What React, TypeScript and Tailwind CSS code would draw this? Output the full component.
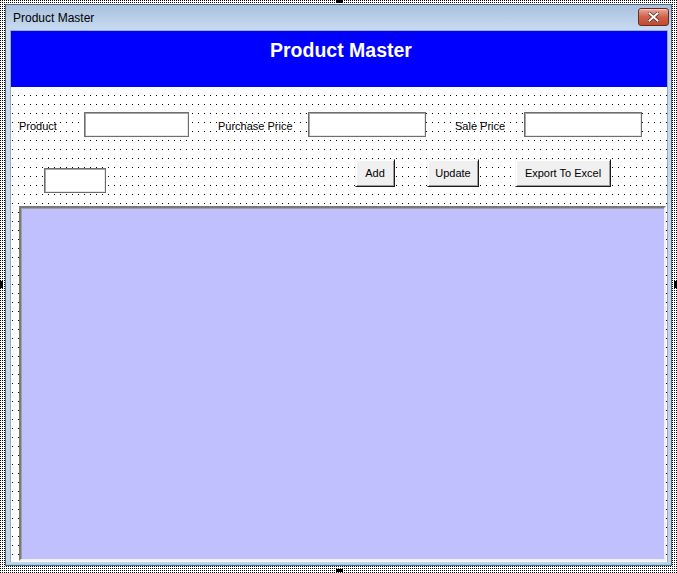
import React from "react";

const font = { fontFamily: '"Liberation Sans", Arial, sans-serif' };

function TextBox({ w }: { w: string }) {
  return (
    <div
      className={`${w} h-[25px] shrink-0 bg-white border border-[#6e6e6e] shadow-[inset_1px_1px_0_#a6a6a6,inset_-1px_-1px_0_#e6e6e6]`}
    />
  );
}

function Btn({ label, w, ml }: { label: string; w: string; ml: string }) {
  return (
    <div
      className={`${w} ${ml} h-[28px] shrink-0 flex items-center justify-center pt-[1px] bg-[#f0f0f0] border border-t-[#f4f4f4] border-l-[#f4f4f4] border-b-[#1a1a1a] border-r-[#1a1a1a] shadow-[inset_1px_1px_0_#ffffff,inset_-1px_-1px_0_#a0a0a0] text-[11px] text-black`}
    >
      {label}
    </div>
  );
}

export default function App() {
  return (
    <div
      className="relative w-[677px] h-[573px] overflow-hidden pt-[4px] pl-[5px] bg-white bg-[conic-gradient(at_1px_1px,#ffffff_0_75%,#000000_0)] bg-[length:2px_2px]"
      style={font}
    >
      {/* window */}
      <div className="w-[667px] h-[562px] flex flex-col border border-[#52677f] bg-[#c4d7ec]">
        {/* title bar */}
        <div className="h-[25px] shrink-0 flex items-center justify-between bg-gradient-to-b from-[#a9c1de] to-[#c8dbf0] pl-[7px] pr-[2px]">
          <span className="text-[12px] text-black leading-none">Product Master</span>
          <div className="w-[31px] h-[18px] mt-[-1px] rounded-[3px] border border-[#6b2a20] bg-gradient-to-b from-[#e6a898] via-[#d0604a] to-[#c24a32] flex items-center justify-center shadow-[inset_0_1px_0_#f4c8bc]">
            <svg width="11" height="10" viewBox="0 0 11 10">
              <path d="M1.5 1.5 L9.5 8.5 M9.5 1.5 L1.5 8.5" stroke="#4a1a14" strokeWidth="3.2" strokeLinecap="square" />
              <path d="M1.5 1.5 L9.5 8.5 M9.5 1.5 L1.5 8.5" stroke="#ffffff" strokeWidth="2" strokeLinecap="square" />
            </svg>
          </div>
        </div>
        {/* frame body */}
        <div className="flex-1 flex pl-[4px] pr-[3px] pb-[3px] bg-gradient-to-b from-[#c8dbf0] to-[#c0d4ea] shadow-[inset_0_-1px_0_#8fd3e6]">
          {/* client */}
          <div className="w-[658px] h-[532px] flex flex-col border-t border-l border-r border-[#9aa9bb] bg-white bg-[conic-gradient(at_1px_1px,transparent_0_75%,#000000_0)] bg-[length:6px_9px] bg-[position:1px_1px]">
            {/* header */}
            <div className="h-[56px] shrink-0 bg-[#0000ff] flex items-center justify-center">
              <span className="text-white font-bold text-[19.5px] mt-[-16px] ml-[4px]">
                Product Master
              </span>
            </div>
            {/* row 1 */}
            <div className="mt-[25px] h-[25px] flex items-center pl-[8px] text-[11px] text-black">
              <span className="w-[65px] shrink-0 pt-[4px]">Product</span>
              <TextBox w="w-[105px]" />
              <span className="w-[90px] ml-[29px] shrink-0 pt-[4px]">Purchase Price</span>
              <TextBox w="w-[118px]" />
              <span className="w-[69px] ml-[29px] shrink-0 pt-[4px]">Sale Price</span>
              <TextBox w="w-[118px]" />
            </div>
            {/* row 2 */}
            <div className="mt-[22px] flex items-start">
              <div className="ml-[33px] mt-[9px]">
                <TextBox w="w-[62px]" />
              </div>
              <Btn label="Add" w="w-[40px]" ml="ml-[249px]" />
              <Btn label="Update" w="w-[52px]" ml="ml-[32px]" />
              <Btn label="Export To Excel" w="w-[96px]" ml="ml-[36px]" />
            </div>
            {/* list box */}
            <div className="mt-[13px] ml-[8px] w-[647px] h-[355px] bg-[#c0c0ff] border-2 border-t-[#7a7a7a] border-l-[#7a7a7a] border-b-[#f0f0f0] border-r-[#f0f0f0] shadow-[inset_1px_1px_0_#a0a0a0]" />
          </div>
        </div>
      </div>
      {/* selection handles */}
      <div className="absolute left-[336px] top-0 w-[7px] h-[3px] bg-black" />
      <div className="absolute left-[336px] bottom-[1px] w-[7px] h-[3px] bg-black" />
      <div className="absolute left-0 top-[281px] w-[3px] h-[7px] bg-black" />
      <div className="absolute right-0 top-[281px] w-[3px] h-[7px] bg-black" />
    </div>
  );
}
